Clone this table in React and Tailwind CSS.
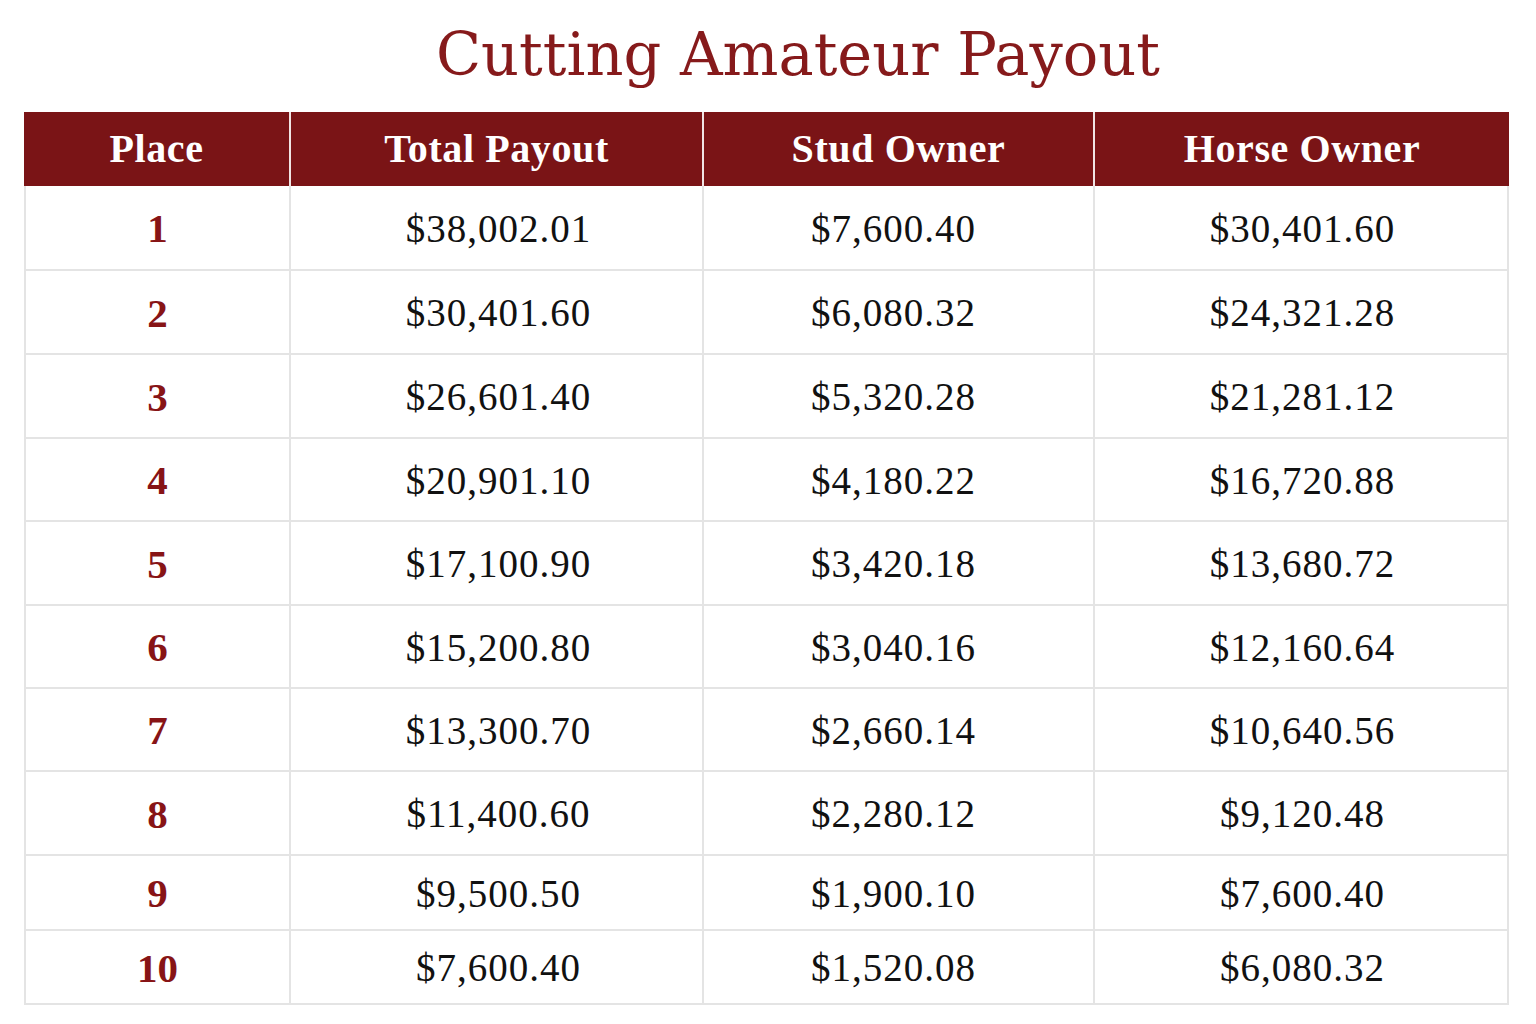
const rows = [
  { place: 1, total: '$38,002.01', stud: '$7,600.40', horse: '$30,401.60' },
  { place: 2, total: '$30,401.60', stud: '$6,080.32', horse: '$24,321.28' },
  { place: 3, total: '$26,601.40', stud: '$5,320.28', horse: '$21,281.12' },
  { place: 4, total: '$20,901.10', stud: '$4,180.22', horse: '$16,720.88' },
  { place: 5, total: '$17,100.90', stud: '$3,420.18', horse: '$13,680.72' },
  { place: 6, total: '$15,200.80', stud: '$3,040.16', horse: '$12,160.64' },
  { place: 7, total: '$13,300.70', stud: '$2,660.14', horse: '$10,640.56' },
  { place: 8, total: '$11,400.60', stud: '$2,280.12', horse: '$9,120.48' },
  { place: 9, total: '$9,500.50', stud: '$1,900.10', horse: '$7,600.40' },
  { place: 10, total: '$7,600.40', stud: '$1,520.08', horse: '$6,080.32' },
]

const headers = ['Place', 'Total Payout', 'Stud Owner', 'Horse Owner']

const rowHeight = ['h-[85px]', 'h-[84px]', 'h-[84px]', 'h-[83px]', 'h-[84px]', 'h-[83px]', 'h-[83px]', 'h-[84px]', 'h-[75px]', 'h-[74px]']

export default function App() {
  return (
    <div className="min-h-screen bg-white pb-4 font-['Liberation_Serif',serif]">
      {/* Title */}
      <div className="h-[112px] flex items-center justify-center pl-[60px]">
        <h1 className="text-[59px] leading-none text-[#861a1b] font-['DejaVu_Serif',serif] pb-[4px]">
          Cutting Amateur Payout
        </h1>
      </div>

      <div className="ml-[24px] w-[1485px]">
        {/* Header */}
        <div className="grid grid-cols-[267px_413px_391px_414px] h-[74px] bg-[#7a1416]">
          {headers.map((h, i) => (
            <div
              key={h}
              className={`flex items-center justify-center text-white font-bold text-[40px] tracking-[0.6px] ${
                i < 3 ? 'border-r-2 border-[#f1e4e4]' : ''
              }`}
            >
              {h}
            </div>
          ))}
        </div>

        {/* Body */}
        <div className="border-x-2 border-[#e4e4e4]">
          {rows.map((r, idx) => (
            <div
              key={r.place}
              className={`grid grid-cols-[265px_413px_391px_412px] border-b-2 border-[#e4e4e4] ${rowHeight[idx]}`}
            >
              <div className="flex items-center justify-center pt-[3px] border-r-2 border-[#e4e4e4] text-[41px] font-bold text-[#871416]">
                {r.place}
              </div>
              <div className="flex items-center justify-center pt-[3px] pl-[4px] border-r-2 border-[#e4e4e4] text-[39px] tracking-[1px] text-[#111]">
                {r.total}
              </div>
              <div className="flex items-center justify-center pt-[3px] pr-[10px] border-r-2 border-[#e4e4e4] text-[39px] tracking-[1px] text-[#111]">
                {r.stud}
              </div>
              <div className="flex items-center justify-center pt-[3px] pl-[3px] text-[39px] tracking-[1px] text-[#111]">
                {r.horse}
              </div>
            </div>
          ))}
        </div>
      </div>
    </div>
  )
}
